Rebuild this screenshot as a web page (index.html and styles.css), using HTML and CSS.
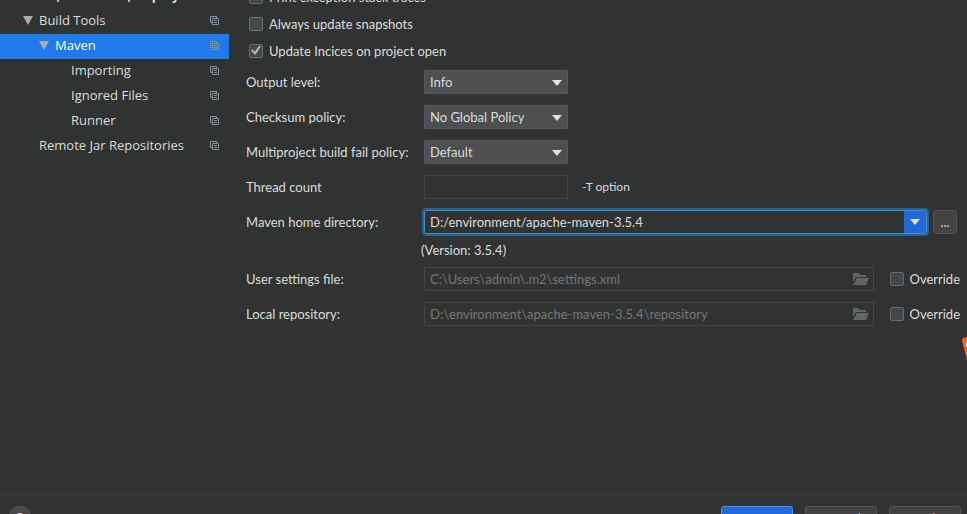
FILE: index.html
```html
<!DOCTYPE html>
<html lang="en">
<head>
<meta charset="utf-8">
<title>Settings - Maven</title>
<link rel="stylesheet" href="styles.css">
</head>
<body>
<svg class="defs" aria-hidden="true">
  <symbol id="copy" viewBox="0 0 9 9"><path d="M2 6.500H.5v-6h6V2M2.500 2.500h6v6h-6zM4 4.500h3M4 6.500h3" fill="none" stroke="currentColor"/></symbol>
  <symbol id="arrow" viewBox="0 0 10 9"><path d="M0 0h10L5 9z" fill="currentColor"/></symbol>
  <symbol id="drop" viewBox="0 0 10 6"><path d="M0 0h10L5 6z" fill="currentColor"/></symbol>
  <symbol id="folder" viewBox="0 0 16 12"><path d="M0 0h5l2 2h6v2H3L0 9zM4 5h12l-3 7H0z" fill="currentColor"/></symbol>
</svg>
<div class="dialog">
  <nav class="tree" aria-label="Settings">
    <a class="node group" href="#build"><span>Build, Execution, Deployment</span></a>
    <a class="node level-1" href="#tools"><svg class="arrow"><use href="#arrow"/></svg><span>Build Tools</span><svg class="copy"><use href="#copy"/></svg></a>
    <a class="node level-2 selected" href="#maven"><svg class="arrow"><use href="#arrow"/></svg><span>Maven</span><svg class="copy"><use href="#copy"/></svg></a>
    <a class="node level-3" href="#importing"><span>Importing</span><svg class="copy"><use href="#copy"/></svg></a>
    <a class="node level-3" href="#ignored"><span>Ignored Files</span><svg class="copy"><use href="#copy"/></svg></a>
    <a class="node level-3" href="#runner"><span>Runner</span><svg class="copy"><use href="#copy"/></svg></a>
    <a class="node level-2" href="#jars"><span>Remote Jar Repositories</span><svg class="copy"><use href="#copy"/></svg></a>
  </nav>
  <main class="panel">
    <label class="check check-row"><input type="checkbox">Print exception stack traces</label>
    <label class="check check-row"><input type="checkbox">Always update snapshots</label>
    <label class="check check-row"><input type="checkbox" checked>Update Incices on project open</label>
    <div class="row">
      <label class="name" for="output">Output level:</label>
      <div class="picker"><select id="output"><option>Info</option></select><svg><use href="#drop"/></svg></div>
    </div>
    <div class="row">
      <label class="name" for="checksum">Checksum policy:</label>
      <div class="picker"><select id="checksum"><option>No Global Policy</option></select><svg><use href="#drop"/></svg></div>
    </div>
    <div class="row">
      <label class="name" for="fail">Multiproject build fail policy:</label>
      <div class="picker"><select id="fail"><option>Default</option></select><svg><use href="#drop"/></svg></div>
    </div>
    <div class="row">
      <label class="name" for="threads">Thread count</label>
      <input class="field short" id="threads" type="text">
      <span class="hint">-T option</span>
    </div>
    <div class="row">
      <label class="name" for="home">Maven home directory:</label>
      <div class="combo"><input id="home" type="text" value="D:/environment/apache-maven-3.5.4"><button type="button" aria-label="Show list"><svg><use href="#drop"/></svg></button></div>
      <button class="browse" type="button">...</button>
    </div>
    <p class="version">(Version: 3.5.4)</p>
    <div class="row">
      <label class="name" for="settings">User settings file:</label>
      <div class="file"><input class="field" id="settings" type="text" value="C:\Users\admin\.m2\settings.xml" disabled><svg><use href="#folder"/></svg></div>
      <label class="check override"><input type="checkbox">Override</label>
    </div>
    <div class="row">
      <label class="name" for="repo">Local repository:</label>
      <div class="file"><input class="field" id="repo" type="text" value="D:\environment\apache-maven-3.5.4\repository" disabled><svg><use href="#folder"/></svg></div>
      <label class="check override"><input type="checkbox">Override</label>
    </div>
  </main>
</div>
<footer class="footer">
  <button class="help" type="button">?</button>
  <button class="action primary" type="button">OK</button>
  <button class="action" type="button">Cancel</button>
  <button class="action" type="button">Apply</button>
</footer>
<svg class="badge" viewBox="0 0 5 24" aria-hidden="true"><path d="M5 0L1 1Q0 2 0 4l4 15 1 3z" fill="#f4602c"/><path d="M5 5Q3 7 4 9l1 1z" fill="#fff"/></svg>
</body>
</html>
```
FILE: styles.css
```css
* { box-sizing: border-box; }

body {
  margin: 0;
  height: 100vh;
  overflow: hidden;
  display: flex;
  flex-direction: column;
  background: #313332;
  color: #dcdcdc;
  font: 13px/20px "Open Sans", "Noto Sans", sans-serif;
}

input, select, button { font: inherit; color: inherit; margin: 0; }
.defs { display: none; }

.dialog { flex: 1; min-height: 0; display: flex; overflow: hidden; }

/* The tree and the panel are both scrolled a little past their first line. */
.tree { width: 229px; flex: none; margin-top: -16px; }
.node {
  display: flex;
  align-items: center;
  height: 25px;
  padding: 0 10px 2px 0;
  color: inherit;
  text-decoration: none;
}
.node span { padding-bottom: 2px; }
.group { padding-left: 23px; font-weight: bold; }
.level-1 { padding-left: 23px; }
.level-2 { padding-left: 39px; }
.level-3 { padding-left: 71px; }
.selected { background: #1f7bed; color: #fff; }
.arrow { width: 10px; height: 9px; margin-right: 6px; color: #adadad; }
.copy { width: 9px; height: 9px; margin-left: auto; color: #87939a; }

.panel {
  flex: 1;
  min-width: 0;
  padding: 0 7px 0 17px;
  margin-top: -17px;
  font-family: Lato, "Open Sans", sans-serif;
}

.check { display: flex; align-items: center; gap: 6px; }
.check-row { height: 27px; padding-left: 3px; }
.check input {
  appearance: none;
  flex: none;
  width: 14px;
  height: 14px;
  border: 1px solid #6b6b6b;
  border-radius: 2px;
  background: #43494a;
}
.check input:checked::before {
  content: "";
  display: block;
  width: 10px;
  height: 10px;
  margin: 1px;
  background: #b4b4b4;
  clip-path: polygon(0 52%, 15% 38%, 38% 62%, 80% 0, 100% 10%, 42% 95%);
}

.row { display: flex; align-items: center; height: 35px; }
.name { width: 178px; flex: none; }

.picker { position: relative; width: 144px; }
.picker select {
  appearance: none;
  display: block;
  width: 100%;
  height: 24px;
  padding: 0 5px;
  border: 1px solid #56585a;
  border-radius: 1px;
  background: #4d4f51;
}
.picker svg {
  position: absolute;
  right: 6px;
  top: 10px;
  width: 10px;
  height: 6px;
  color: #e0e0e0;
  pointer-events: none;
}

.field {
  display: block;
  width: 100%;
  height: 24px;
  padding: 0 5px;
  border: 1px solid #444647;
  background: transparent;
}
.field:disabled { color: #777; }
.short { width: 144px; }
.hint { margin-left: 14px; font-size: 12px; }

.combo {
  flex: 1;
  display: flex;
  height: 24px;
  border: 1px solid #3f8fc0;
  border-radius: 2px;
  outline: 2px solid #27618c;
}
.combo input {
  flex: 1;
  min-width: 0;
  padding: 0 5px;
  border: 0;
  outline: 0;
  background: transparent;
}
.combo button {
  display: flex;
  align-items: center;
  justify-content: center;
  width: 22px;
  padding: 0;
  border: 0;
  background: #2169d8;
}
.combo svg { width: 10px; height: 6px; color: #e0e0e0; }
.browse {
  width: 24px;
  height: 24px;
  margin: 0 3px 0 6px;
  padding: 0;
  border: 1px solid #575757;
  border-radius: 3px;
  background: #434344;
}

.version { margin: 0; padding-left: 175px; line-height: 22px; }

.file { position: relative; flex: 1; }
.file svg {
  position: absolute;
  right: 5px;
  top: 6px;
  width: 16px;
  height: 12px;
  color: #626668;
}
.override { margin-left: 16px; }

.footer {
  flex: none;
  display: flex;
  gap: 12px;
  height: 44px;
  margin-bottom: -24px;
  padding: 11px 6px 0 9px;
  border-top: 1px solid #3c3e3e;
}
.action {
  width: 72px;
  height: 24px;
  padding: 0;
  border: 1px solid #555;
  border-radius: 3px;
  background: #424243;
}
.primary { border-color: #4b8ff0; background: #216ade; }
.help {
  width: 22px;
  height: 22px;
  margin-right: auto;
  padding: 0;
  border: 1px solid #5a5a5a;
  border-radius: 50%;
  background: #484849;
  font-weight: bold;
}

.badge { position: absolute; right: 0; top: 337px; width: 5px; height: 24px; }
```
